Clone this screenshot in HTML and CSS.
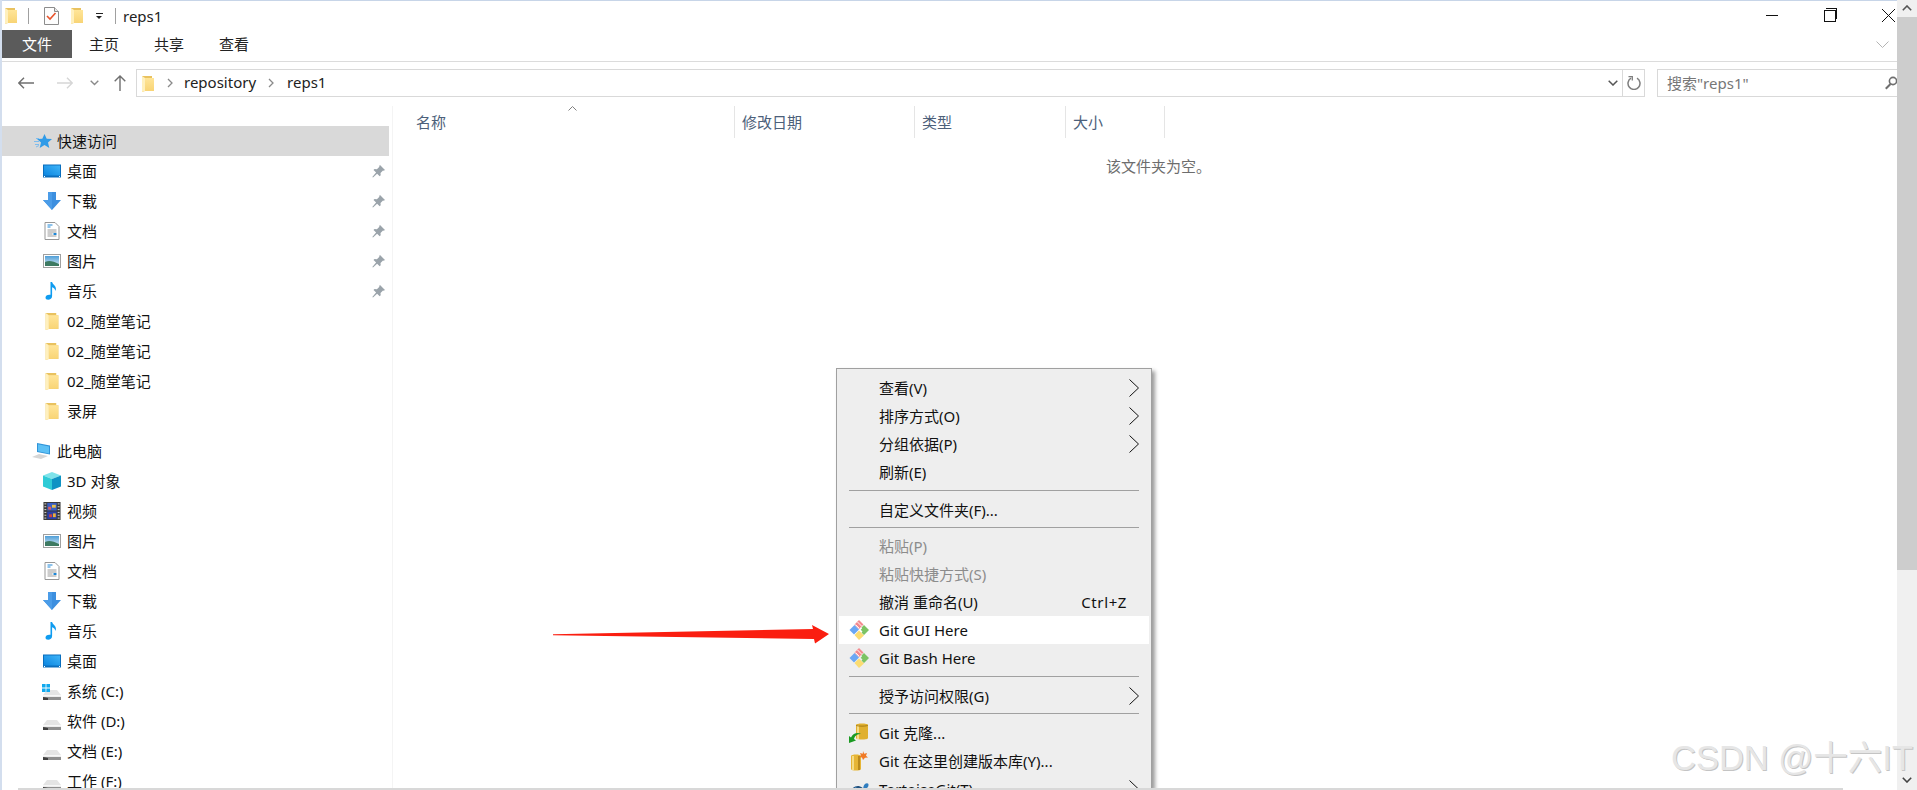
FILE: index.html
```html
<!DOCTYPE html>
<html lang="zh-CN">
<head>
<meta charset="utf-8">
<title>reps1</title>
<link rel="stylesheet" href="styles.css">
</head>
<body>
<svg class="defs" aria-hidden="true">
  <defs>
    <linearGradient id="fold" x1="0" y1="0" x2="0" y2="1"><stop offset="0" stop-color="#ffe598"/><stop offset="1" stop-color="#f8d475"/></linearGradient>
    <linearGradient id="sky" x1="0" y1="0" x2="0" y2="1"><stop offset="0" stop-color="#4f9fd8"/><stop offset="1" stop-color="#dcebf4"/></linearGradient>
    <linearGradient id="desk" x1="0" y1="1" x2="1" y2="0"><stop offset="0" stop-color="#0c86e0"/><stop offset="1" stop-color="#3fb4f8"/></linearGradient>
    <symbol id="i-folder" viewBox="0 0 12 17"><path d="M0 1h10v2h2v13H3l-3 1z" fill="#e9c25f"/><path d="M3 3h9v13H3z" fill="url(#fold)"/><path d="M0 1l3 2v13l-3 1z" fill="#fff0bd"/></symbol>
    <symbol id="i-note" viewBox="0 0 15 18"><path d="M.5.5h10l4 4v13H.5z" fill="#fdfdfd" stroke="#8c8c8c"/><path d="M10.5.5v4h4" fill="#e8e8e8" stroke="#8c8c8c"/><path d="M3 9l3 3 5.500-6" fill="none" stroke="#e8532b" stroke-width="1.600"/></symbol>
    <symbol id="i-pin" viewBox="0 0 13 13"><path d="M8 0l5 5-1.300.7-.7-.3-2.500 2.500.2 2.400-1 1-2.600-2.600L1 12.500l-.7-.6 3.800-4.300L1.500 5l1-1 2.400.2L7.400 1.700 7.200 1z" fill="#9aa3aa"/></symbol>
    <symbol id="i-star" viewBox="0 0 18 14"><path d="M10.500 0l2.200 4.700 5.300.4-4 3.300 1.300 5.600-4.800-3-4.800 3 1.300-5.600-4-3.300 5.300-.4z" fill="#2f9be8"/><path d="M0 7.500h5M1 10.500h4M2 4.500h3M2 13l3-1.500" stroke="#7dbcee" fill="none"/></symbol>
    <symbol id="i-desk" viewBox="0 0 18 13"><rect width="18" height="13" fill="#0a6ebd"/><rect x="1" y="1" width="16" height="10" fill="url(#desk)"/><path d="M1 12h1M16 12h1" stroke="#fff"/></symbol>
    <symbol id="i-down" viewBox="0 0 18 18"><path d="M5 0h8v8h5l-9 10L0 8h5z" fill="#3d8fdf"/><path d="M5 0h4v18L0 8h5z" fill="#4b9ce8"/></symbol>
    <symbol id="i-doc" viewBox="0 0 15 18"><path d="M.5.500h10l4 4v13H.5z" fill="#fff" stroke="#979797"/><path d="M3 3h5M3 5h3" stroke="#1d86d6"/><path d="M3 8h9M3 10h9M3 12h5M3 14h9" stroke="#9a9a9a"/><path d="M9 11h3v2H9z" fill="#1d86d6"/></symbol>
    <symbol id="i-pic" viewBox="0 0 18 14"><rect x=".5" y=".5" width="17" height="13" fill="#fff" stroke="#a0a0a0"/><rect x="2" y="2" width="14" height="10" fill="url(#sky)"/><path d="M2 8c4-2 8-1 14 2v2H2z" fill="#3d7a62"/></symbol>
    <symbol id="i-music" viewBox="0 0 13 18"><path d="M5 0h1.600c.5 3 5.400 4 3.400 9-.3-2-2-3.300-3.400-3.800V14c0 2.500-2 3.800-4 3.800C1 17.800 0 16.800 0 15.500 0 13.700 2 12.300 5 12.800z" fill="#0f9cf0"/></symbol>
    <symbol id="i-cube" viewBox="0 0 18 18"><path d="M9 0l9 3.500L9 7 0 3.500z" fill="#7fe3ea"/><path d="M0 3.500L9 7v11l-9-3.500z" fill="#2fcbd6"/><path d="M18 3.500L9 7v11l9-3.500z" fill="#0f93c4"/></symbol>
    <symbol id="i-film" viewBox="0 0 18 19"><rect width="18" height="19" fill="#3a3a3a"/><path d="M1 2h2M1 5h2M1 8h2M1 11h2M1 14h2M1 17h2M15 2h2M15 5h2M15 8h2M15 11h2M15 14h2M15 17h2" stroke="#ddd"/><rect x="4" y="1" width="10" height="8" fill="#3b5fc4"/><rect x="4" y="10" width="10" height="8" fill="#2b3fa8"/><path d="M5 5h3v3H5z" fill="#e35a5a"/><path d="M9 3h4v3H9z" fill="#e8c14a"/><path d="M6 13h3v3H6z" fill="#d04040"/><path d="M10 12h3v4h-3z" fill="#e8b03a"/></symbol>
    <symbol id="i-drive" viewBox="0 0 18 10"><path d="M4 0h10l4 5v4H0V5z" fill="#e4e4e4"/><path d="M0 5h18v1.500H0z" fill="#f7f7f7"/><path d="M0 7h18v3H0z" fill="#8f8f8f"/><path d="M0 7l5 1v2H0z" fill="#3f3f3f"/></symbol>
    <symbol id="i-win" viewBox="0 0 8 8"><path d="M0 0h3.600v3.600H0zM4.400 0H8v3.600H4.400zM0 4.400h3.600V8H0zM4.400 4.400H8V8H4.400z" fill="#11a9ee"/></symbol>
    <symbol id="i-pc" viewBox="0 0 20 16"><path d="M5 0l13 2.500v9L5 9z" fill="#2f93d8"/><path d="M6 1.200l11 2.200v7L6 8.300z" fill="#5cc0f5"/><path d="M0 14l7-3 9 2-7 3z" fill="#d6d6d6"/></symbol>
    <symbol id="i-git" viewBox="0 0 20 20"><path d="M.5 10l5-5L10 9.500l-5 5z" fill="#6aa7f4"/><path d="M5.500 15l4.500-4.500 5 5L10 20z" fill="#fbdc72"/><path d="M15 5l5 5-5 5-2.500-2.500 1-1-1.800-1.800L13 8.500 12.500 7.500z" fill="#7cc363"/><path d="M5.500 4.500L10 0l4.500 4.500L10 9z" fill="#f38a8f"/><path d="M8.500 2l4 4" stroke="#fff" stroke-width=".9"/><path d="M6.500 4.500l3.500 3.500" stroke="#fff" stroke-width=".9"/></symbol>
    <symbol id="i-clone" viewBox="0 0 20 20"><path d="M7 2c0-2 12-2 12 0v13c0 2-12 2-12 0z" fill="#e0b030"/><path d="M9 2v14" stroke="#f6dc86" stroke-width="2"/><path d="M7 2c0 1.500 12 1.500 12 0" fill="none" stroke="#a67c14"/><path d="M0 20v-7l2 1.500C4 10 9 9 12 11c-3 0-6 1-7 5l2 1.500z" fill="#1b9a22"/></symbol>
    <symbol id="i-init" viewBox="0 0 18 20"><path d="M1 5c0-2 10-2 10 0v13c0 2-10 2-10 0z" fill="#e6b535"/><path d="M3 5v14" stroke="#f6dc86" stroke-width="2"/><path d="M9 5v14" stroke="#b98a1c" stroke-width="2"/><path d="M13 0l1.200 2.800L17 2l-1 2.800L18 6.500l-3 .3L13 9l-1-2.500-3-.3 2-1.700L10 2l2.800.8z" fill="#f07a26"/></symbol>
    <symbol id="i-turtle" viewBox="0 0 21 14"><path d="M1 11c1-5 6-8 10-7 3 .8 5 3 5 6H1z" fill="#22527e"/><path d="M15 6c0-3 2-5 4-5s2 3 0 5z" fill="#2f7dbf"/><path d="M3 8l4-3 4 3-4 2z" fill="#4a8fc4"/></symbol>
    <symbol id="i-chev" viewBox="0 0 10 18"><path d="M.5.500L9.500 9 .5 17.500" fill="none" stroke="#111"/></symbol>
  </defs>
</svg>

<div class="window">
  <div class="explorer">
    <header class="titlebar">
      <svg class="ic-folder"><use href="#i-folder"/></svg>
      <span class="tb-sep tb-sep-a"></span>
      <svg class="ic-note"><use href="#i-note"/></svg>
      <svg class="ic-folder ic-folder-b"><use href="#i-folder"/></svg>
      <span class="qa-drop"></span>
      <span class="tb-sep tb-sep-b"></span>
      <span class="title">reps1</span>
      <div class="winctl">
        <span class="wc-min"></span>
        <span class="wc-max"></span>
        <svg class="wc-close" viewBox="0 0 13 13"><path d="M0 0l13 13M13 0L0 13" stroke="#111" fill="none"/></svg>
      </div>
    </header>

    <nav class="tabs">
      <span class="tab tab-file">文件</span>
      <span class="tab tab-home">主页</span>
      <span class="tab tab-share">共享</span>
      <span class="tab tab-view">查看</span>
      <svg class="ribbon-toggle" viewBox="0 0 13 7"><path d="M.5.500L6.500 6.500 12.500.5" stroke="#b4b4b4" fill="none"/></svg>
    </nav>

    <div class="addressrow">
      <svg class="nav-back" viewBox="0 0 16 12"><path d="M16 6H1M6 .7L.8 6 6 11.300" stroke="#6f6f6f" stroke-width="1.400" fill="none"/></svg>
      <svg class="nav-fwd" viewBox="0 0 16 12"><path d="M0 6h15M10 .7L15.200 6 10 11.300" stroke="#d6d6d6" stroke-width="1.400" fill="none"/></svg>
      <svg class="nav-drop" viewBox="0 0 9 6"><path d="M.7.700L4.500 4.500 8.300.7" stroke="#8a8a8a" stroke-width="1.400" fill="none"/></svg>
      <svg class="nav-up" viewBox="0 0 12 16"><path d="M6 16V1M.7 6.300L6 1l5.300 5.300" stroke="#6f6f6f" stroke-width="1.400" fill="none"/></svg>
      <div class="address">
        <svg class="ic-folder addr-folder"><use href="#i-folder"/></svg>
        <svg class="crumb-sep" viewBox="0 0 6 10"><path d="M1 1l4 4-4 4" stroke="#8a8a8a" stroke-width="1.300" fill="none"/></svg>
        <span class="crumb">repository</span>
        <svg class="crumb-sep" viewBox="0 0 6 10"><path d="M1 1l4 4-4 4" stroke="#8a8a8a" stroke-width="1.300" fill="none"/></svg>
        <span class="crumb">reps1</span>
        <svg class="addr-drop" viewBox="0 0 10 6"><path d="M.7.700L5 5l4.300-4.300" stroke="#555" stroke-width="1.500" fill="none"/></svg>
        <span class="addr-refresh"><svg viewBox="0 0 14 14"><path d="M4 2.200A6 6 0 1 0 10 2.200" stroke="#7d7d7d" stroke-width="1.500" fill="none"/><path d="M1.500 .6h3.800v3.800" stroke="#7d7d7d" stroke-width="1.300" fill="none"/></svg></span>
      </div>
      <div class="search">
        <span class="search-text">搜索"reps1"</span>
        <svg class="search-ic" viewBox="0 0 12 14"><circle cx="8" cy="5" r="3.600" stroke="#6f6f6f" stroke-width="1.600" fill="none"/><path d="M5.500 8L.8 12.700" stroke="#6f6f6f" stroke-width="2"/></svg>
      </div>
    </div>

    <div class="main">
      <aside class="sidebar">
        <div class="row row-head row-selected"><svg class="ic-star"><use href="#i-star"/></svg>快速访问</div>
        <div class="row"><svg class="ic"><use href="#i-desk"/></svg>桌面<svg class="pin"><use href="#i-pin"/></svg></div>
        <div class="row"><svg class="ic"><use href="#i-down"/></svg>下载<svg class="pin"><use href="#i-pin"/></svg></div>
        <div class="row"><svg class="ic"><use href="#i-doc"/></svg>文档<svg class="pin"><use href="#i-pin"/></svg></div>
        <div class="row"><svg class="ic"><use href="#i-pic"/></svg>图片<svg class="pin"><use href="#i-pin"/></svg></div>
        <div class="row"><svg class="ic"><use href="#i-music"/></svg>音乐<svg class="pin"><use href="#i-pin"/></svg></div>
        <div class="row"><svg class="ic"><use href="#i-folder"/></svg>02_随堂笔记</div>
        <div class="row"><svg class="ic"><use href="#i-folder"/></svg>02_随堂笔记</div>
        <div class="row"><svg class="ic"><use href="#i-folder"/></svg>02_随堂笔记</div>
        <div class="row"><svg class="ic"><use href="#i-folder"/></svg>录屏</div>
        <div class="row row-head row-pc"><svg class="ic-star ic-pc"><use href="#i-pc"/></svg>此电脑</div>
        <div class="row"><svg class="ic"><use href="#i-cube"/></svg>3D 对象</div>
        <div class="row"><svg class="ic"><use href="#i-film"/></svg>视频</div>
        <div class="row"><svg class="ic"><use href="#i-pic"/></svg>图片</div>
        <div class="row"><svg class="ic"><use href="#i-doc"/></svg>文档</div>
        <div class="row"><svg class="ic"><use href="#i-down"/></svg>下载</div>
        <div class="row"><svg class="ic"><use href="#i-music"/></svg>音乐</div>
        <div class="row"><svg class="ic"><use href="#i-desk"/></svg>桌面</div>
        <div class="row"><span class="drive-wrap"><svg class="ic ic-drive"><use href="#i-drive"/></svg><svg class="ic-win"><use href="#i-win"/></svg></span>系统 (C:)</div>
        <div class="row"><span class="drive-wrap"><svg class="ic ic-drive"><use href="#i-drive"/></svg></span>软件 (D:)</div>
        <div class="row"><span class="drive-wrap"><svg class="ic ic-drive"><use href="#i-drive"/></svg></span>文档 (E:)</div>
        <div class="row"><span class="drive-wrap"><svg class="ic ic-drive"><use href="#i-drive"/></svg></span>工作 (F:)</div>
      </aside>

      <section class="content">
        <div class="cols">
          <div class="col col-name">名称<svg class="sort" viewBox="0 0 9 5"><path d="M.5 4.500L4.500.5l4 4" stroke="#808080" fill="none"/></svg></div>
          <div class="col col-date">修改日期</div>
          <div class="col col-type">类型</div>
          <div class="col col-size">大小</div>
        </div>
        <p class="empty">该文件夹为空。</p>
      </section>
    </div>
  </div>

  <div class="scrollbar">
    <svg class="sb-arrow sb-up" viewBox="0 0 10 6"><path d="M.8 5.200L5 1l4.200 4.200" stroke="#555" stroke-width="1.600" fill="none"/></svg>
    <div class="sb-thumb"></div>
    <svg class="sb-arrow sb-down" viewBox="0 0 10 6"><path d="M.8.800L5 5 9.200.8" stroke="#444" stroke-width="1.600" fill="none"/></svg>
  </div>
</div>

<svg class="arrow" viewBox="0 0 277 19"><path d="M0 9.300L260 4 259 0 276 9 262 18.500 261 14 0 10.300z" fill="#fa1e10"/></svg>

<div class="menu">
  <div class="mi">查看(V)<svg class="mchev"><use href="#i-chev"/></svg></div>
  <div class="mi">排序方式(O)<svg class="mchev"><use href="#i-chev"/></svg></div>
  <div class="mi">分组依据(P)<svg class="mchev"><use href="#i-chev"/></svg></div>
  <div class="mi">刷新(E)</div>
  <div class="msep msep-10"></div>
  <div class="mi">自定义文件夹(F)...</div>
  <div class="msep msep-8"></div>
  <div class="mi mi-off">粘贴(P)</div>
  <div class="mi mi-off">粘贴快捷方式(S)</div>
  <div class="mi">撤消 重命名(U)<span class="shortcut">Ctrl+Z</span></div>
  <div class="mi mi-hot"><svg class="micon"><use href="#i-git"/></svg>Git GUI Here</div>
  <div class="mi"><svg class="micon"><use href="#i-git"/></svg>Git Bash Here</div>
  <div class="msep msep-10"></div>
  <div class="mi">授予访问权限(G)<svg class="mchev"><use href="#i-chev"/></svg></div>
  <div class="msep msep-9"></div>
  <div class="mi"><svg class="micon"><use href="#i-clone"/></svg>Git 克隆...</div>
  <div class="mi"><svg class="micon"><use href="#i-init"/></svg>Git 在这里创建版本库(Y)...</div>
  <div class="mi"><svg class="micon"><use href="#i-turtle"/></svg>TortoiseGit(T)<svg class="mchev"><use href="#i-chev"/></svg></div>
</div>

<div class="statusline"></div>
<div class="watermark">CSDN @十六IT</div>
</body>
</html>
```

FILE: styles.css
```css
* { box-sizing: border-box; }
html, body { margin: 0; padding: 0; }
body {
  width: 1917px;
  height: 790px;
  overflow: hidden;
  position: relative;
  background: #fff;
  color: #111;
  font: 15px/20px "Noto Sans", "Noto Sans CJK SC", sans-serif;
}
.defs { position: absolute; width: 0; height: 0; }

.window {
  display: flex;
  height: 790px;
  border-left: 2px solid #d3deee;
}
.explorer {
  flex: 1;
  min-width: 0;
  display: flex;
  flex-direction: column;
  border-top: 1px solid #c7d5e8;
}

/* Title bar */
.titlebar {
  height: 29px;
  display: flex;
  align-items: center;
  padding-left: 3px;
  flex: none;
}
.ic-folder { width: 12px; height: 17px; flex: none; }
.ic-folder-b { margin-left: 12px; }
.tb-sep { width: 1px; height: 16px; background: #a0a0a0; }
.tb-sep-a { margin: 0 15px 0 11px; }
.tb-sep-b { margin: 0 7px 0 12px; }
.ic-note { width: 15px; height: 18px; }
.qa-drop {
  margin-left: 13px;
  width: 7px;
  height: 6px;
  border-top: 1px solid #222;
  position: relative;
}
.qa-drop::after {
  content: "";
  position: absolute;
  left: 0;
  top: 2px;
  border: 3.5px solid transparent;
  border-top-color: #222;
  border-bottom: 0;
}
.title { color: #222; }
.winctl {
  margin-left: auto;
  width: 131px;
  display: flex;
  align-items: center;
  gap: 46px;
  height: 100%;
  padding-bottom: 1px;
}
.wc-min { width: 12px; height: 1px; background: #111; }
.wc-max {
  width: 12px;
  height: 12px;
  position: relative;
  top: 1px;
  border: 1px solid #111;
}
.wc-max::before {
  content: "";
  position: absolute;
  left: 1px;
  top: -3px;
  width: 10px;
  height: 10px;
  border: 1px solid #111;
  border-bottom: 0;
  border-left: 0;
}
.wc-close { width: 13px; height: 13px; flex: none; }

/* Ribbon tabs */
.tabs {
  height: 32px;
  flex: none;
  display: flex;
  border-bottom: 1px solid #dcdcdc;
  padding-bottom: 3px;
  align-items: stretch;
}
.tab {
  display: flex;
  align-items: center;
  justify-content: center;
  color: #222;
}
.tab-file { width: 70px; background: #5b5b5b; color: #fff; }
.tab-home { margin-left: 17px; }
.tab-share { margin-left: 35px; }
.tab-view { margin-left: 35px; }
.ribbon-toggle { width: 13px; height: 7px; align-self: center; margin: 0 8px 0 auto; }

/* Address row */
.addressrow {
  height: 36px;
  flex: none;
  display: flex;
  align-items: center;
  padding: 6px 0 0;
}
.nav-back { width: 16px; height: 12px; margin-left: 16px; }
.nav-fwd { width: 16px; height: 12px; margin-left: 23px; }
.nav-drop { width: 9px; height: 6px; margin-left: 17px; }
.nav-up { width: 12px; height: 16px; margin-left: 15px; }
.address {
  margin-left: 10px;
  width: 1509px;
  height: 28px;
  border: 1px solid #d9d9d9;
  display: flex;
  align-items: center;
  padding-left: 5px;
}
.addr-folder { width: 12px; height: 17px; }
.crumb-sep { width: 6px; height: 10px; margin: 0 11px 0 13px; }
.crumb + .crumb-sep { margin-left: 12px; margin-right: 13px; }
.crumb { color: #222; position: relative; top: -1px; }
.addr-drop { width: 10px; height: 6px; margin-left: auto; margin-right: 4px; }
.addr-refresh {
  width: 22px;
  height: 26px;
  border-left: 1px solid #d9d9d9;
  display: flex;
  align-items: center;
  justify-content: center;
}
.addr-refresh svg { width: 14px; height: 14px; }
.search {
  margin-left: 12px;
  flex: 1;
  height: 28px;
  border: 1px solid #d9d9d9;
  border-right: 0;
  display: flex;
  align-items: center;
  padding-left: 9px;
  overflow: hidden;
  color: #777;
}
.search-ic { width: 12px; height: 14px; margin-left: auto; }

/* Main */
.main { flex: 1; min-height: 0; display: flex; padding-top: 8px; }
.sidebar {
  width: 391px;
  flex: none;
  overflow: hidden;
  border-right: 1px solid #f4f4f4;
  padding: 20px 3px 0 0;
}
.row {
  height: 30px;
  display: flex;
  align-items: center;
  padding: 0 4px 0 41px;
}
.row-head { padding-left: 32px; }
.row-selected { background: #d9d9d9; }
.row-pc { margin-top: 10px; }
.ic { width: 18px; height: 18px; margin-right: 6px; flex: none; }
.ic-star { width: 18px; height: 14px; margin-right: 5px; flex: none; }
.ic-pc { width: 20px; height: 16px; margin: 0 5px 0 -2px; }
.pin { width: 13px; height: 13px; margin-left: auto; }
.drive-wrap { position: relative; width: 18px; height: 18px; margin-right: 6px; flex: none; display: flex; align-items: flex-end; }
.ic-drive { height: 10px; margin: 0; }
.ic-win { position: absolute; left: -1px; top: 2px; width: 8px; height: 8px; }

/* Content */
.content { flex: 1; min-width: 0; }
.cols { display: flex; height: 32px; }
.col {
  border-right: 1px solid #e5e5e5;
  padding: 6px 0 0 7px;
  color: #4c607a;
  position: relative;
}
.col-name { width: 342px; padding-left: 23px; }
.col-date { width: 180px; }
.col-type { width: 151px; }
.col-size { width: 99px; }
.sort { position: absolute; left: 175px; top: 0; width: 9px; height: 5px; }
.empty { margin: 18px 0 0; padding-left: 713px; color: #6d6d6d; }

/* Scrollbar */
.scrollbar {
  width: 20px;
  flex: none;
  background: #f0f0f0;
  display: flex;
  flex-direction: column;
  align-items: center;
  padding-top: 5px;
}
.sb-arrow { width: 10px; height: 6px; flex: none; }
.sb-thumb { width: 100%; height: 553px; margin-top: 6px; background: #cdcdcd; }
.sb-down { margin-top: auto; margin-bottom: 7px; }

/* Overlays */
.arrow { position: absolute; left: 553px; top: 625px; width: 277px; height: 19px; }
.menu {
  position: absolute;
  left: 836px;
  top: 368px;
  width: 316px;
  height: 420px;
  overflow: hidden;
  background: #eee;
  border: 1px solid #a0a0a0;
  border-bottom: 0;
  box-shadow: 3px 3px 4px rgba(0, 0, 0, .4);
  padding: 5px 2px 0;
  color: #111;
}
.mi {
  height: 28px;
  display: flex;
  align-items: center;
  padding: 0 0 1px 40px;
  position: relative;
}
.mi-off { color: #8c8c8c; }
.mi-hot { background: #fff; }
.mchev { position: absolute; left: 290px; top: 5px; width: 10px; height: 18px; }
.micon { position: absolute; left: 10px; top: 4px; width: 20px; height: 20px; }
.shortcut { margin-left: auto; margin-right: 22px; letter-spacing: .6px; }
.msep { position: relative; }
.msep::after {
  content: "";
  position: absolute;
  left: 10px;
  right: 10px;
  top: 4px;
  height: 1px;
  background: #a0a0a0;
}
.msep-10 { height: 10px; }
.msep-9 { height: 9px; }
.msep-9::after { top: 3px; }
.msep-8 { height: 8px; }
.msep-8::after { top: 3px; }
.statusline {
  position: absolute;
  left: 18px;
  top: 788px;
  width: 1825px;
  height: 2px;
  background: #d8d8d8;
}
.watermark {
  position: absolute;
  right: 4px;
  top: 738px;
  font: 34.500px/40px "Liberation Sans", "Noto Sans CJK SC", sans-serif;
  color: #e6e6e6;
  text-shadow: 1px 1px 0 #c4c4c4;
  white-space: nowrap;
}
```
